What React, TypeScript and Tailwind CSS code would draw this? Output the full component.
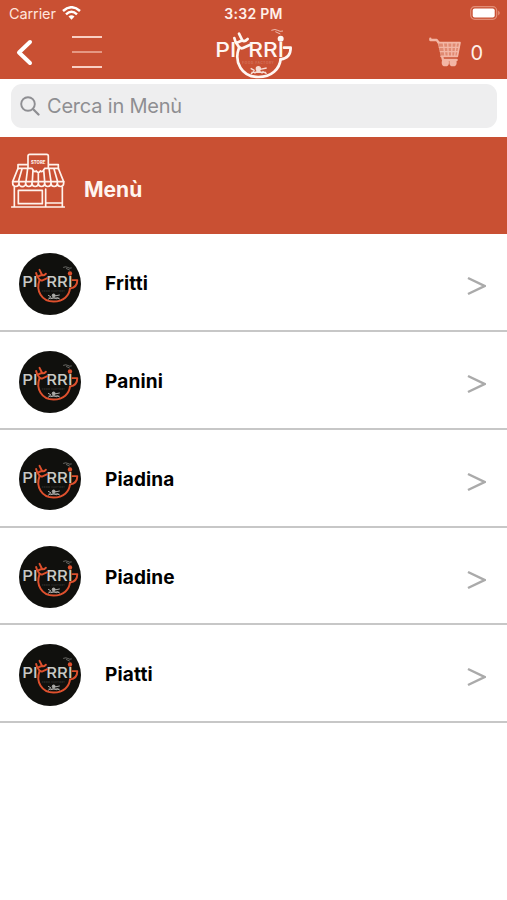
const categories = ["Fritti", "Panini", "Piadina", "Piadine", "Piatti"];

type LogoProps = { className: string; letters: string; cup: string };

function Logo({ className, letters, cup }: LogoProps) {
  return (
    <svg className={className} viewBox="30 80 234 156" fill="none">
      <g fill={letters} fontFamily="Inter, sans-serif" fontSize="61" fontWeight="500">
        <text x="31" y="170" textLength="63" lengthAdjust="spacingAndGlyphs">PI</text>
        <text x="130" y="170" textLength="107" lengthAdjust="spacingAndGlyphs">RRI</text>
      </g>
      <g stroke={cup} strokeWidth="8" strokeLinecap="round" strokeLinejoin="round">
        <path d="M102 142C86 185 110 230 160 230C200 230 224 206 227 176" />
        <path d="M237 142H257C257 161 249 174 227 177" />
        <path d="M88 113Q91 127 97 133Q105 147 114 143L134 134M102 100L112 120Q118 126 128 116M94 128L113 120" strokeWidth="8" />
      </g>
      <circle cx="227" cy="115" r="9" fill={cup} />
      <path d="M199 90Q211 85 218 90T234 92M211 94L226 101" stroke={letters} strokeWidth="3" opacity=".65" />
      <text x="112" y="190" fill={letters} opacity=".3" fontFamily="Inter, sans-serif" fontSize="9" textLength="94">FOOD FACTORY</text>
      <g stroke={letters} strokeWidth="4" opacity=".85">
        <path d="M137 204L149 211M139 216H183M165 207L185 203M147 213L138 221M172 213L185 220" />
        <circle cx="160" cy="205" r="6" fill={letters} />
        <path d="M148 219Q160 208 173 219" />
      </g>
    </svg>
  );
}

function StoreIcon() {
  return (
    <svg className="h-[56px] w-[54px] shrink-0" viewBox="31 38 162 168" fill="none" stroke="#fff3ed" strokeWidth="5" strokeLinejoin="round" strokeLinecap="round">
      <path d="M82 84V47Q82 42 87 42H138Q143 42 143 47V84M52 85V73H80M144 73H173V85" />
      <path d="M81 84H52L36 124H189L173 84H145M81 84L76 124M64 86L53 124M145 84L151 124M160 86L171 124M97 88L95 124M129 88L132 124M113 97V124M82 84H94Q100 98 107 92Q113 101 119 92Q126 98 132 84H144" />
      <path d="M36 124V129A9 9 0 0 0 55 129V124V129A9 9 0 0 0 75 129V124V129A9 9 0 0 0 94 129V124V129A9 9 0 0 0 113 129V124V129A9 9 0 0 0 132 129V124V129A9 9 0 0 0 151 129V124V129A9 9 0 0 0 170 129V124V129A9 9 0 0 0 189 129V124" />
      <path d="M41 141V199M185 141V199M33 200H191M53 150H125V190H53ZM135 146V199M137 188H184" />
      <text x="91" y="70" fill="#fff3ed" stroke="none" fontFamily="Inter, sans-serif" fontSize="13" fontWeight="800" textLength="43" lengthAdjust="spacingAndGlyphs">STORE</text>
    </svg>
  );
}

function StatusBar() {
  return (
    <div className="grid h-7 grid-cols-3 pt-[5px] text-[14.5px] leading-[18px]">
      <div className="flex gap-[6px] pl-[9px]">
        <span className="tracking-[-0.1px] text-[#ffe5dc]">Carrier</span>
        <svg className="mt-px h-[14px] w-[19px]" viewBox="0 0 19 14" fill="none" stroke="white" strokeWidth="2.5">
          <path d="M1 5Q9.500-2.500 18 5M4 8.300Q9.500 3.300 15 8.300" />
          <path d="M6.500 10.600Q9.500 8 12.500 10.600L9.500 13.800Z" fill="white" stroke="none" />
        </svg>
      </div>
      <div className="text-center text-[14px] font-semibold tracking-[0.3px] text-[#fff0ea]">3:32 PM</div>
      <div className="flex justify-end pr-[6px]">
        <svg className="mt-px h-[14px] w-[31px]" viewBox="0 0 31 14">
          <rect x=".7" y=".7" width="26" height="12.600" rx="4" fill="none" stroke="#e28e77" strokeWidth="1.200" />
          <rect x="2.700" y="2.500" width="22" height="9" rx="2" fill="white" />
          <path d="M28.300 4.500Q31 7 28.300 9.500Z" fill="#eaa18d" />
        </svg>
      </div>
    </div>
  );
}

function CartIcon() {
  return (
    <svg className="h-[30px] w-[33px]" viewBox="57 112 99 90" fill="none" stroke="#f3b6a5" strokeLinecap="round" strokeLinejoin="round">
      <path d="M61 117V121H80L87 130L99 181H140" strokeWidth="7" />
      <path d="M85 129H150L142 170H93" fill="#e08a72" strokeWidth="5" />
      <path d="M100 130L105 169M113 130L115 169M126 130L125 169M139 130L134 169M88 143H147M91 156H145" strokeWidth="4" />
      <circle cx="106" cy="189" r="8" strokeWidth="6" fill="#f3b6a5" />
      <circle cx="129" cy="189" r="8" strokeWidth="6" fill="#f3b6a5" />
    </svg>
  );
}

export default function App() {
  return (
    <main className="min-h-[900px] w-full bg-white font-['Inter','Liberation_Sans',sans-serif] text-black">
      <header className="h-[79px] bg-[#c95033]">
        <StatusBar />
        <div className="flex h-[51px] justify-between">
          <div className="flex">
            <svg className="ml-[15px] mt-[10px] h-[29px] w-[19px]" viewBox="0 0 19 29" fill="none" stroke="white" strokeWidth="4" strokeLinecap="round" strokeLinejoin="round">
              <path d="M15 4L4 14.500L15 25" />
            </svg>
            <div className="ml-[38px] mt-[8px] flex h-[32px] w-[30px] flex-col justify-between">
              <span className="h-[2px] bg-[#f9cfc3]" />
              <span className="h-[2px] bg-[#e59883]" />
              <span className="h-[2px] bg-[#f9cfc3]" />
            </div>
          </div>
          <Logo className="-mt-px ml-[113px] h-[52px] w-[78px]" letters="#fff6f2" cup="#fff6f2" />
          <div className="ml-auto flex pr-[24px] pt-[9px] text-[#fff0ea]">
            <CartIcon />
            <span className="ml-[8px] mt-[1px] text-[20px] leading-[30px]">0</span>
          </div>
        </div>
      </header>
      <div className="h-[58px] px-[11px] pt-[5px]">
        <div className="-mr-px flex h-[44px] items-center rounded-[11px] bg-[#eeeeef] pl-[9px] text-[#8e8e92]">
          <svg className="h-[20px] w-[20px]" viewBox="0 0 20 20" fill="none" stroke="currentColor" strokeWidth="1.900" strokeLinecap="round">
            <circle cx="8" cy="8" r="6.800" />
            <path d="M13 13L18.500 18.500" strokeWidth="2.300" />
          </svg>
          <span className="ml-[7px] text-[20px] tracking-[-0.2px]">Cerca in Menù</span>
        </div>
      </div>
      <section className="flex h-[97px] bg-[#c95033] pl-[11px] pt-[16px]">
        <StoreIcon />
        <h1 className="ml-[19px] mt-[23px] text-[21px] font-bold leading-7 text-[#fff4ef]">Menù</h1>
      </section>
      <ul className="pt-[0.6px]">
        {categories.map((name) => (
          <li key={name} className="flex h-[97.7px] items-center border-b-2 border-[#c7c7c7] pl-[19px] pr-[21px] pt-[3px]">
            <span className="flex h-[62px] w-[62px] shrink-0 items-center justify-center rounded-full bg-[#10100d]">
              <Logo className="mt-[1px] h-[38px] w-[57px]" letters="#c9c9c5" cup="#de502d" />
            </span>
            <span className="ml-[24px] mt-px text-[19px] font-bold leading-6 tracking-[0.15px]">{name}</span>
            <svg className="ml-auto mt-[5px] h-[20px] w-[19px]" viewBox="0 0 19 20" fill="none" stroke="#aaaaaa" strokeWidth="2.500">
              <path d="M1 2L17.500 10L1 18" />
            </svg>
          </li>
        ))}
      </ul>
    </main>
  );
}
